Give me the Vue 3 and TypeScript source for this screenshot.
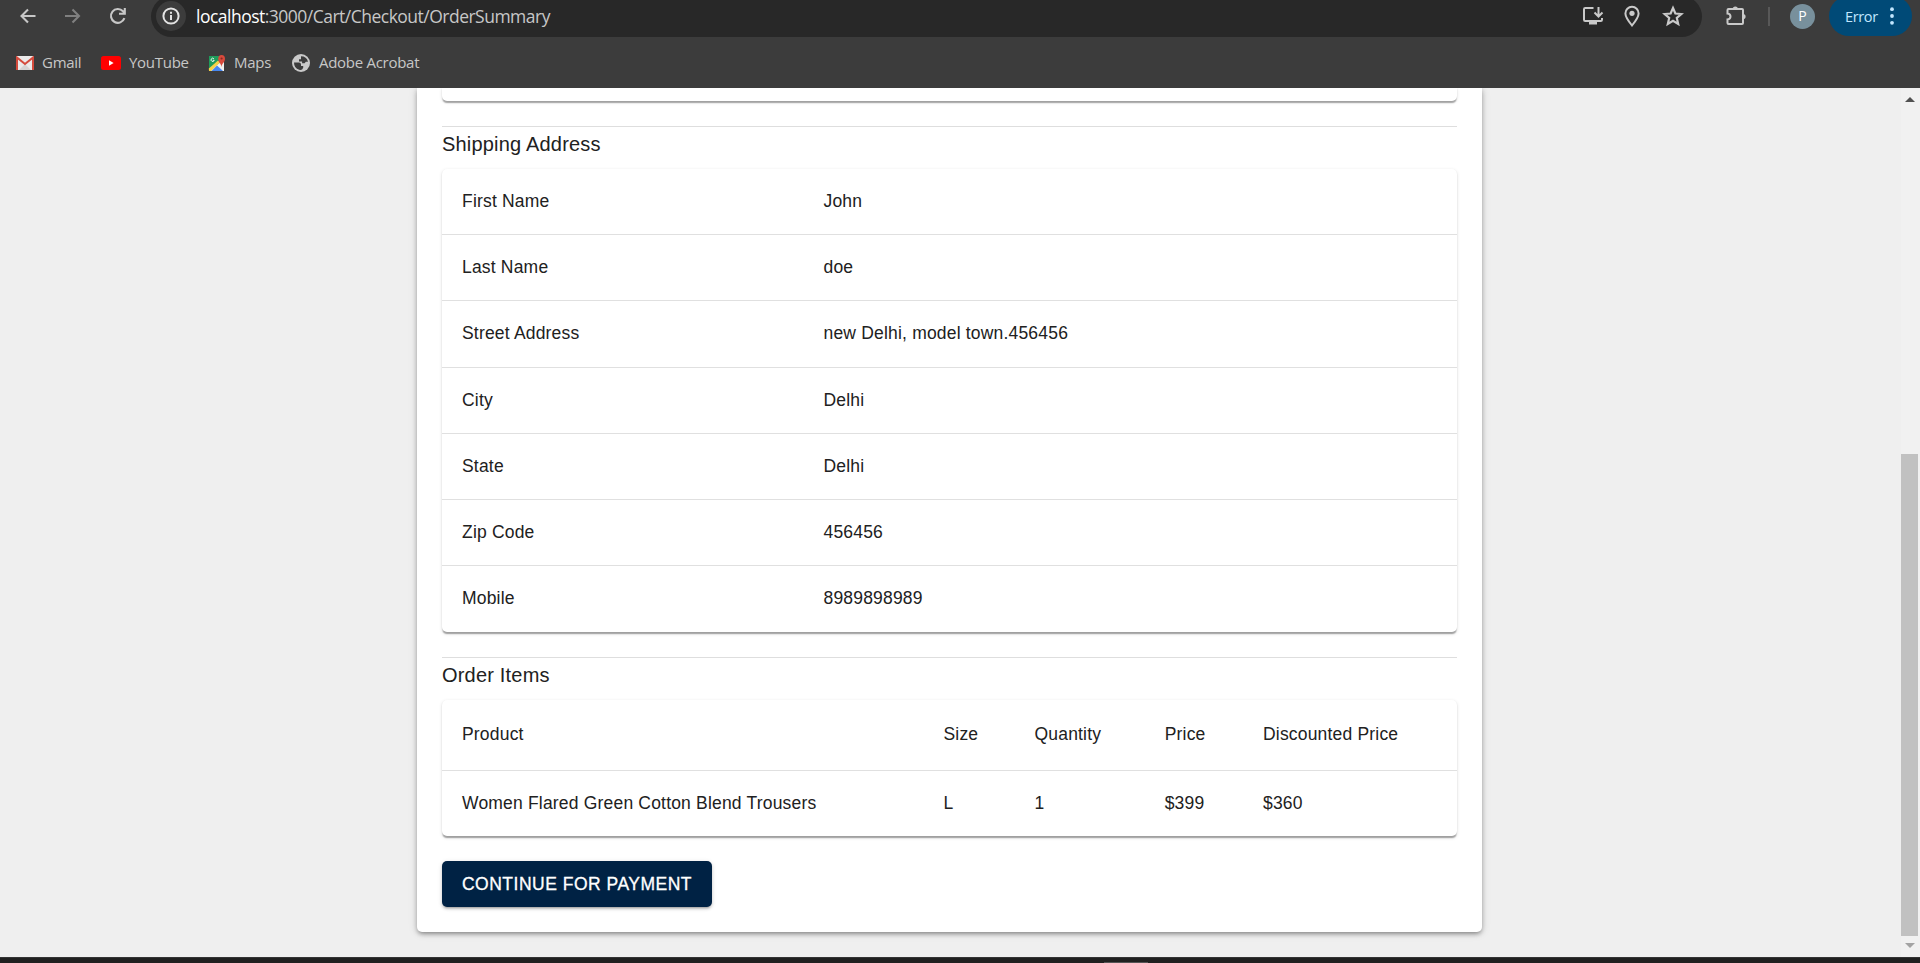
<script setup lang="ts">
interface Bookmark { id: string; label: string }
const bookmarks: Bookmark[] = [
  { id: 'gmail', label: 'Gmail' },
  { id: 'youtube', label: 'YouTube' },
  { id: 'maps', label: 'Maps' },
  { id: 'acrobat', label: 'Adobe Acrobat' },
]
const address: [string, string][] = [
  ['First Name', 'John'],
  ['Last Name', 'doe'],
  ['Street Address', 'new Delhi, model town.456456'],
  ['City', 'Delhi'],
  ['State', 'Delhi'],
  ['Zip Code', '456456'],
  ['Mobile', '8989898989'],
]
const columns: string[] = ['Product', 'Size', 'Quantity', 'Price', 'Discounted Price']
const items: string[][] = [['Women Flared Green Cotton Blend Trousers', 'L', '1', '$399', '$360']]
</script>

<template>
  <div class="window">
    <header class="chrome">
      <div class="toolbar">
        <svg class="nav back" viewBox="0 0 20 20"><path d="M17.500 10H3.500M10 3.500L3.500 10l6.500 6.500" /></svg>
        <svg class="nav forward" viewBox="0 0 20 20"><path d="M2 10h14M9.500 3.500L16 10l-6.500 6.500" /></svg>
        <svg class="nav reload" viewBox="0 0 20 20"><path d="M16.400 12.200A6.900 6.900 0 1 1 15 5.300L16.800 7.200M16.800 2v5.800H11" /></svg>
        <div class="omnibox">
          <span class="info">
            <svg viewBox="0 0 20 20"><circle cx="10" cy="10" r="7.600" /><path d="M10 9v5M10 5.700v2" /></svg>
          </span>
          <span class="url"><b>localhost</b>:3000/Cart/Checkout/OrderSummary</span>
          <svg class="action install" viewBox="0 0 22 20"><path d="M11.500 2H3.200Q2 2 2 3.200v10.600Q2 15 3.200 15h15.600q1.200 0 1.200-1.200V12M16.500 1v9M12.500 6.500l4 4 4-4" /><path class="solid" d="M7 15h8v3.500H7z" /></svg>
          <svg class="action pin" viewBox="0 0 20 22"><path d="M10 20.500C6 15.500 3.400 12 3.400 8.400a6.600 6.600 0 0 1 13.200 0C16.600 12 14 15.500 10 20.500z" /><circle class="solid" cx="10" cy="8.300" r="2.600" /></svg>
          <svg class="action star" viewBox="0 0 20 20"><path d="M10 2.700l2.150 5.050 5.450.45-4.150 3.600 1.250 5.350-4.700-2.850-4.700 2.850 1.250-5.350-4.150-3.600 5.450-.45z" /></svg>
        </div>
        <svg class="puzzle" viewBox="0 0 22 22"><path d="M3.500 4H17q1 0 1 1v13q0 1-1 1H3.500q-1 0-1-1v-3.500q3-.3 3-3t-3-3V5q0-1 1-1z" /><path class="solid" d="M7.700 4a2.600 2.600 0 0 1 5.200 0zM18 8.900a2.600 2.600 0 0 1 0 5.200z" /></svg>
        <span class="separator"></span>
        <span class="avatar"><span>P</span></span>
        <div class="error"><span>Error</span><svg viewBox="0 0 4 18"><circle cx="2" cy="2.200" r="1.900" /><circle cx="2" cy="9" r="1.900" /><circle cx="2" cy="15.800" r="1.900" /></svg></div>
      </div>
      <nav class="bookmarks">
        <a v-for="mark in bookmarks" :key="mark.id" :class="['bookmark', mark.id]">
          <svg v-if="mark.id === 'gmail'" viewBox="0 0 18 14"><rect width="18" height="14" rx="1" fill="#eceaea" /><path d="M3 14l6-6 6 6z" fill="#d5d3d3" /><path d="M1 14V1.500L9 8l8-6.500V14" fill="none" stroke="#d54b3d" stroke-width="2" /></svg>
          <svg v-else-if="mark.id === 'youtube'" viewBox="0 0 20 14"><rect width="20" height="14" rx="2.500" fill="#f00" /><path d="M8 4.300l4.600 2.700L8 9.700z" fill="#fff" /></svg>
          <svg v-else-if="mark.id === 'maps'" viewBox="0 0 18 18"><path d="M1 2h15v15H1z" fill="#f1f1ee" /><path d="M1 2h12v6L1 16z" fill="#1f9b5b" /><path d="M0.800 14.500L10 6.500l2 2L3 17H1z" fill="#f7d247" /><path d="M3.500 17l5.500-5.500 6 5.500z" fill="#4687f1" /><path d="M13.500 13c-.5-4-3.300-4.500-3.300-8.200a3.300 3.800 0 0 1 6.800 0c0 3.700-3 4.200-3.500 8.200z" fill="#d94a3c" /><circle cx="13.600" cy="4.500" r="1.100" fill="#862b24" /><path d="M5.900 4.800a1.600 1.600 0 1 0 .3 1.500H4.900" fill="none" stroke="#fff" stroke-width=".9" /></svg>
          <svg v-else viewBox="0 0 18 18"><circle cx="9" cy="9" r="9" fill="#c9c9c9" /><path d="M2 8.500h5q2 0 2 2v1.500h2.200v1.800q-1 2.800-4 2Q2 14.200 2 8.500zM9 2.200q5.700 0 7 5.500h-2.200l-1.200 1.500h-2.500V7.400H7V5.200h2z" fill="#3c3c3c" /></svg>
          <span>{{ mark.label }}</span>
        </a>
      </nav>
    </header>

    <div class="viewport">
      <main class="page">
        <section class="card">
          <div class="sheet previous"></div>
          <hr />
          <h2>Shipping Address</h2>
          <div class="sheet">
            <dl v-for="row in address" :key="row[0]" class="row address"><dt>{{ row[0] }}</dt><dd>{{ row[1] }}</dd></dl>
          </div>
          <hr />
          <h2>Order Items</h2>
          <div class="sheet">
            <div class="row order head"><span v-for="name in columns" :key="name">{{ name }}</span></div>
            <div v-for="(item, i) in items" :key="i" class="row order"><span v-for="(cell, j) in item" :key="j">{{ cell }}</span></div>
          </div>
          <button type="button">Continue for payment</button>
        </section>
      </main>
      <aside class="scrollbar">
        <svg class="up" viewBox="0 0 10 5"><path d="M0 5l5-5 5 5z" /></svg>
        <div class="thumb"></div>
        <svg class="down" viewBox="0 0 10 5"><path d="M0 0l5 5 5-5z" /></svg>
      </aside>
    </div>
    <footer class="taskbar"><span></span></footer>
  </div>
</template>

<style>
body { margin: 0; overflow: hidden; }
</style>

<style scoped>
* { box-sizing: border-box; }
svg { flex: none; display: block; }
.window { width: 1920px; height: 963px; display: flex; flex-direction: column; overflow: hidden; background: #efefef; font-family: "Liberation Sans", Arial, sans-serif; }
.chrome { height: 88px; flex: none; background: #3c3c3c; overflow: hidden; color: #c7c7c7; font-family: "Open Sans", "Noto Sans", sans-serif; }
.toolbar { height: 41px; margin-top: -4px; display: flex; align-items: center; padding-bottom: 1px; }
.nav { width: 20px; height: 20px; fill: none; stroke: #c7c7c7; stroke-width: 2.1; }
.back { margin-left: 18px; }
.forward { margin-left: 25px; stroke: #808080; }
.reload { margin-left: 25px; margin-right: 23px; }
.omnibox { width: 1551px; height: 41px; margin-bottom: -1px; padding-bottom: 1px; border-radius: 21px; background: #282828; display: flex; align-items: center; flex: none; }
.info { width: 30px; height: 30px; border-radius: 50%; background: #3c3c3c; margin-left: 5px; display: flex; align-items: center; justify-content: center; flex: none; }
.info svg { width: 20px; height: 20px; fill: none; stroke: #e3e3e3; stroke-width: 2; }
.url { margin-left: 10px; width: 1386px; flex: none; font-size: 17.5px; white-space: nowrap; letter-spacing: -0.51px; color: #c7c7c7; }
.url b { font-weight: 400; color: #fff; }
.action, .puzzle { fill: none; stroke: #c9c9c9; stroke-width: 2; }
.solid { fill: #c9c9c9; stroke: none; }
.install { width: 22px; height: 20px; }
.pin { width: 20px; height: 22px; margin-left: 18px; }
.star { width: 22px; height: 22px; margin-left: 20px; }
.puzzle { width: 22px; height: 22px; margin-left: 23px; }
.separator { width: 2px; height: 19px; background: #585858; margin-left: 21px; }
.avatar { width: 25px; height: 25px; border-radius: 50%; margin-left: 20px; background: #78909c; color: #fff; font-size: 14px; line-height: 20px; display: flex; align-items: center; justify-content: center; }
.avatar span { padding-bottom: 1px; }
.error { width: 83px; height: 40px; margin-left: 14px; border-radius: 20px; background: #004a77; color: #c2e7ff; font-size: 14.5px; display: flex; align-items: center; }
.error span { margin-left: 16px; width: 45px; letter-spacing: -.35px; }
.error svg { width: 4px; height: 18px; fill: #c2e7ff; }
.bookmarks { display: flex; height: 51px; align-items: center; }
.bookmark { display: flex; align-items: center; font-size: 15px; white-space: nowrap; letter-spacing: -.28px; }
.bookmark span { padding-bottom: 2px; }
.gmail { margin-left: 16px; width: 85px; }
.gmail svg { width: 18px; height: 14px; margin-right: 8px; }
.youtube { width: 107px; }
.youtube svg { width: 20px; height: 14px; margin-right: 8px; }
.maps { width: 84px; }
.maps svg { width: 18px; height: 18px; margin-right: 8px; }
.acrobat svg { width: 18px; height: 18px; margin-right: 9px; }
.viewport { height: 869px; display: flex; flex: none; overflow: hidden; }
.page { width: 1901px; height: 869px; overflow: hidden; }
.card { width: 1065px; height: 844px; margin-left: 417px; padding: 0 25px; background: #fff; border-radius: 0 0 5px 5px; box-shadow: 0 3px 4px -2px #0004, 0 2px 5px #0003, 0 1px 10px #0002; }
.sheet { border-radius: 5px; background: #fff; box-shadow: 0 2.500px 1.250px -1.250px #0003, 0 1.250px 1.250px #00000024, 0 1.250px 3.750px #0000001f; }
.previous { height: 13px; border-radius: 0 0 5px 5px; }
hr { border: 0; height: 1px; background: #dedede; margin: 25px 0 0; }
h2 { margin: 0; height: 42px; padding-top: 2px; font-size: 20px; line-height: 30px; font-weight: 400; letter-spacing: .19px; color: #212121; }
.row { display: grid; margin: 0; align-items: center; height: 66.200px; border-bottom: 1px solid #e0e0e0; color: #212121; font-size: 17.500px; letter-spacing: .187px; }
.row:last-child { border-bottom-color: transparent; }
.row > * { margin: 0; padding-left: 20px; white-space: nowrap; }
.address { grid-template-columns: 361.500px 1fr; }
.address:last-child { height: 65.800px; }
.order { grid-template-columns: 481.500px 91px 130.200px 98.300px 1fr; }
.order:last-child { height: 65.400px; }
.order.head { height: 71px; }
button { display: block; margin-top: 25px; width: 270px; height: 45.500px; border: 0; padding: 0; border-radius: 5px; background: #002244; color: #fff; font: 500 17.500px/30px "Liberation Sans", Arial, sans-serif; text-transform: uppercase; letter-spacing: .5px; -webkit-text-stroke: .3px #fff; box-shadow: 0 3px 2px -2px #0003, 0 2px 3px #00000024, 0 1px 5px #0000001f; }
.scrollbar { width: 19px; height: 869px; background: #f1f1f1; display: flex; flex-direction: column; }
.scrollbar svg { width: 10px; height: 5px; margin-left: 4px; }
.up { margin-top: 9px; fill: #505050; }
.thumb { width: 17px; height: 482px; margin-top: 352px; background: #c1c1c1; }
.down { margin-top: 7px; fill: #a3a3a3; }
.taskbar { height: 6px; background: #202020; border-top: 1px solid #343434; display: flex; align-items: flex-end; }
.taskbar span { width: 44px; height: 1px; margin-left: 1104px; background: #555; }
</style>
